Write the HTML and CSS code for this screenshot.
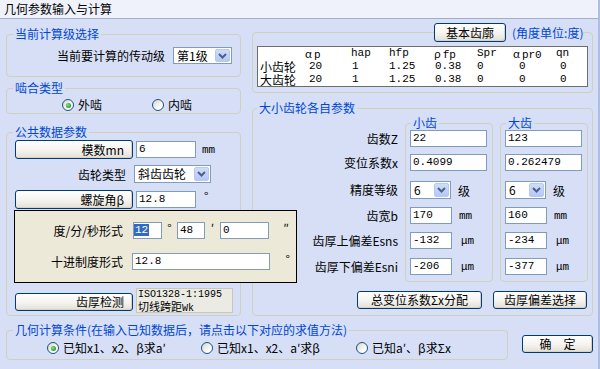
FILE: index.html
```html
<!DOCTYPE html>
<html>
<head>
  <meta charset="UTF-8">
  <link rel="stylesheet" href="styles.css">
</head>
<body>
<div class="window">
  <div class="titlebar">几何参数输入与计算</div>

  <div class="main">
    <!-- left column -->
    <div class="left-col">
      <fieldset class="group stage-group">
        <legend>当前计算级选择</legend>
        <div class="stage-row">
          <span class="stage-label">当前要计算的传动级</span>
          <div class="select stage-select">
            <span class="select-text">第1级</span>
            <span class="select-btn"><svg width="9" height="6" viewBox="0 0 9 6"><path d="M1 1 L4.5 4.5 L8 1" fill="none" stroke="#4d6185" stroke-width="2"/></svg></span>
          </div>
        </div>
      </fieldset>

      <fieldset class="group mesh-group">
        <legend>啮合类型</legend>
        <div class="mesh-row">
          <div class="radio-item"><span class="radio checked"></span>外啮</div>
          <div class="radio-item"><span class="radio"></span>内啮</div>
        </div>
      </fieldset>

      <fieldset class="group common-group">
        <legend>公共数据参数</legend>
        <div class="form-row row-module">
          <button class="btn param-btn">模数mn</button>
          <div class="field w60">6</div>
          <span class="unit unit-mm">mm</span>
        </div>
        <div class="form-row row-type">
          <span class="row-label">齿轮类型</span>
          <div class="select type-select">
            <span class="select-text">斜齿齿轮</span>
            <span class="select-btn"><svg width="9" height="6" viewBox="0 0 9 6"><path d="M1 1 L4.5 4.5 L8 1" fill="none" stroke="#4d6185" stroke-width="2"/></svg></span>
          </div>
        </div>
        <div class="form-row row-helix">
          <button class="btn param-btn">螺旋角β</button>
          <div class="field w60">12.8</div>
          <span class="unit unit-deg">°</span>
        </div>

        <div class="angle-panel">
          <div class="angle-row">
            <span class="angle-label">度/分/秒形式</span>
            <div class="field deg-field sel-field"><span class="sel-text">12</span></div>
            <span class="angle-mark">°</span>
            <div class="field min-field">48</div>
            <span class="angle-mark">′</span>
            <div class="field sec-field">0</div>
            <span class="angle-mark wide">″</span>
          </div>
          <div class="angle-row row-decimal">
            <span class="angle-label">十进制度形式</span>
            <div class="field dec-field">12.8</div>
            <span class="angle-mark wide">°</span>
          </div>
        </div>

        <div class="form-row row-check">
          <button class="btn param-btn check-btn">齿厚检测</button>
          <div class="iso-box">
            <div class="iso-line">ISO1328-1:1995</div>
            <div class="iso-line cjk">切线跨距<span class="mono">Wk</span></div>
          </div>
        </div>
      </fieldset>
    </div>

    <!-- right column -->
    <div class="right-col">
      <fieldset class="group profile-group">
        <legend class="legend-tools">
          <button class="btn profile-btn">基本齿廓</button>
          <span class="angle-unit">(角度单位:度)</span>
        </legend>
        <div class="profile-box">
          <div class="prow">
            <span class="pname"></span><span><i class="greek">α</i>p</span><span>hap</span><span>hfp</span><span><i class="greek">ρ</i>fp</span><span>Spr</span><span><i class="greek">α</i>pr0</span><span>qn</span>
          </div>
          <div class="prow pdata">
            <span class="pname">小齿轮</span><span>20</span><span>1</span><span>1.25</span><span>0.38</span><span>0</span><span>0</span><span>0</span>
          </div>
          <div class="prow pdata">
            <span class="pname">大齿轮</span><span>20</span><span>1</span><span>1.25</span><span>0.38</span><span>0</span><span>0</span><span>0</span>
          </div>
        </div>
      </fieldset>

      <fieldset class="group gear-group">
        <legend>大小齿轮各自参数</legend>
        <div class="gear-cols">
          <div class="gear-labels">
            <span class="glabel">齿数Z</span>
            <span class="glabel">变位系数x</span>
            <span class="glabel tall">精度等级</span>
            <span class="glabel">齿宽b</span>
            <span class="glabel">齿厚上偏差Esns</span>
            <span class="glabel">齿厚下偏差Esni</span>
          </div>

          <fieldset class="group sub-group">
            <legend>小齿</legend>
            <div class="sub-grid">
              <div class="sub-row"><div class="field w77">22</div></div>
              <div class="sub-row"><div class="field w77">0.4099</div></div>
              <div class="sub-row tall">
                <div class="select grade-select">
                  <span class="select-text">6</span>
                  <span class="select-btn"><svg width="9" height="6" viewBox="0 0 9 6"><path d="M1 1 L4.5 4.5 L8 1" fill="none" stroke="#4d6185" stroke-width="2"/></svg></span>
                </div>
                <span class="grade-unit">级</span>
              </div>
              <div class="sub-row"><div class="field w42">170</div><span class="unit unit-side">mm</span></div>
              <div class="sub-row"><div class="field w42">-132</div><span class="unit unit-um">μm</span></div>
              <div class="sub-row"><div class="field w42">-206</div><span class="unit unit-um">μm</span></div>
            </div>
          </fieldset>

          <fieldset class="group sub-group">
            <legend>大齿</legend>
            <div class="sub-grid">
              <div class="sub-row"><div class="field w77">123</div></div>
              <div class="sub-row"><div class="field w77">0.262479</div></div>
              <div class="sub-row tall">
                <div class="select grade-select">
                  <span class="select-text">6</span>
                  <span class="select-btn"><svg width="9" height="6" viewBox="0 0 9 6"><path d="M1 1 L4.5 4.5 L8 1" fill="none" stroke="#4d6185" stroke-width="2"/></svg></span>
                </div>
                <span class="grade-unit">级</span>
              </div>
              <div class="sub-row"><div class="field w42">160</div><span class="unit unit-side">mm</span></div>
              <div class="sub-row"><div class="field w42">-234</div><span class="unit unit-um">μm</span></div>
              <div class="sub-row"><div class="field w42">-377</div><span class="unit unit-um">μm</span></div>
            </div>
          </fieldset>
        </div>
        <div class="gear-actions">
          <button class="btn shift-btn">总变位系数Σx分配</button>
          <button class="btn dev-btn">齿厚偏差选择</button>
        </div>
      </fieldset>
    </div>
  </div>

  <!-- bottom row -->
  <div class="bottom-row">
    <fieldset class="group cond-group">
      <legend>几何计算条件(在输入已知数据后，请点击以下对应的求值方法)</legend>
      <div class="cond-row">
        <div class="radio-item"><span class="radio checked"></span>已知x1、x2、β求a′</div>
        <div class="radio-item"><span class="radio"></span>已知x1、x2、a′求β</div>
        <div class="radio-item"><span class="radio"></span>已知a′、β求Σx</div>
      </div>
    </fieldset>
    <button class="btn ok-btn">确　定</button>
  </div>
</div>
</body>
</html>
```

FILE: styles.css
```css
* {
  box-sizing: border-box;
}
body {
  margin: 0;
  background: #d6dff6;
  font-family: "Noto Sans CJK SC", sans-serif;
  font-size: 12px;
  color: #000;
}
.window {
  width: 600px;
  height: 369px;
  background: #d6dff6;
  overflow: hidden;
  border-right: 2px solid #aebde6;
}
.titlebar {
  height: 19px;
  line-height: 18px;
  padding-left: 4px;
  background: #eff2fb;
  border-bottom: 1px solid #a3aec9;
}
.main {
  display: grid;
  grid-template-columns: 235px 341px;
  column-gap: 11px;
  padding-left: 6px;
  align-items: start;
}

/* group boxes */
.group {
  margin: 0;
  padding: 0 0 0 8px;
  border: 1px solid #d0d0bf;
  border-radius: 4px;
  min-width: 0;
}
.group > legend {
  padding: 0 2px;
  margin-left: -2px;
  line-height: 14px;
  color: #0046d5;
}

/* common controls */
.btn {
  font-family: "Noto Sans CJK SC", sans-serif;
  font-size: 12px;
  line-height: 16px;
  color: #000;
  padding: 0;
  background: linear-gradient(#ffffff, #f4f3ef 55%, #e2dfd5);
  border: 1px solid #003c74;
  border-radius: 3px;
  box-shadow: inset -1px -1px 0 #d8d3c6;
}
.field {
  height: 17px;
  background: #fff;
  border: 1px solid #7f9db9;
  font-family: "Liberation Mono", monospace;
  font-size: 11px;
  line-height: 15px;
  padding-left: 2px;
  white-space: nowrap;
  overflow: hidden;
}
.sel-field {
  padding-left: 0;
}
.sel-text {
  background: #316ac5;
  color: #fff;
  padding: 0 1px;
}
.select {
  display: flex;
  height: 18px;
  background: #fff;
  border: 1px solid #7f9db9;
}
.select-text {
  flex: 1;
  padding-left: 3px;
  line-height: 16px;
  white-space: nowrap;
}
.select-btn {
  width: 15px;
  margin: 1px;
  border-radius: 2px;
  background: linear-gradient(#cfdcfd, #b4c8f6);
  border: 1px solid #b7c9f2;
  display: flex;
  align-items: center;
  justify-content: center;
}
.unit {
  font-family: "Liberation Mono", monospace;
  font-size: 11px;
  color: #000;
}
.radio-item {
  display: flex;
  align-items: center;
  gap: 4px;
  line-height: 14px;
  white-space: nowrap;
}
.radio {
  width: 12px;
  height: 12px;
  border-radius: 50%;
  border: 1px solid #1c5180;
  background: linear-gradient(135deg, #d6d6cf, #ffffff 75%);
  display: flex;
  align-items: center;
  justify-content: center;
}
.radio.checked::after {
  content: '';
  width: 5px;
  height: 5px;
  border-radius: 50%;
  background: radial-gradient(circle at 40% 40%, #8be08b, #21a121 70%);
}

/* stage group */
.stage-group {
  margin-top: 8px;
}
.stage-row {
  display: flex;
  justify-content: flex-end;
  align-items: center;
  gap: 8px;
  padding: 6px 8px 12px 0;
}
.stage-select {
  width: 59px;
  height: 17px;
}
.stage-select .select-text {
  line-height: 15px;
}

/* mesh group */
.mesh-group {
  margin-top: 4px;
}
.mesh-row {
  display: grid;
  grid-template-columns: 90px 90px;
  padding: 3px 0 1px 47px;
}

/* common data group */
.common-group {
  margin-top: 11px;
  padding-bottom: 2px;
}
.form-row {
  display: flex;
  align-items: center;
}
.row-module {
  height: 19px;
  margin-top: 1px;
}
.row-type {
  height: 18px;
  margin-top: 6px;
}
.row-helix {
  height: 19px;
  margin-top: 7px;
}
.param-btn {
  width: 118px;
  height: 19px;
  text-align: right;
  padding-right: 8px;
  margin-right: 3px;
}
.w60 {
  width: 60px;
}
.unit-mm {
  margin-left: 6px;
}
.unit-deg {
  margin-left: 8px;
  font-family: "Noto Sans CJK SC", sans-serif;
  font-size: 12px;
  align-self: flex-start;
  line-height: 12px;
}
.row-label {
  width: 111px;
  text-align: right;
  margin-right: 8px;
}
.type-select {
  width: 77px;
}

.angle-panel {
  position: relative;
  z-index: 1;
  width: 283px;
  height: 73px;
  margin: 1px 0 0 -1px;
  background: #ece9d8;
  border: 1px solid #000;
  padding-top: 11px;
}
.angle-row {
  display: flex;
  align-items: center;
  height: 17px;
}
.row-decimal {
  margin-top: 14px;
}
.angle-label {
  width: 108px;
  text-align: right;
  margin-right: 10px;
}
.row-decimal .angle-label {
  margin-right: 9px;
}
.angle-mark {
  width: 15px;
  text-align: center;
  align-self: flex-start;
  line-height: 12px;
}
.angle-mark.wide {
  width: 20px;
  text-align: right;
}
.deg-field {
  width: 29px;
}
.min-field {
  width: 28px;
}
.sec-field {
  width: 49px;
}
.dec-field {
  width: 138px;
}

.row-check {
  height: 25px;
  margin-top: 5px;
  align-items: flex-start;
}
.check-btn {
  height: 18px;
  margin-top: 5px;
}
.iso-box {
  width: 97px;
  height: 25px;
  background: #ebebe4;
  border: 1px solid #c9c7ba;
  padding-left: 1px;
}
.iso-line {
  font-family: "Liberation Mono", monospace;
  font-size: 10px;
  line-height: 11px;
  white-space: nowrap;
}
.iso-line.cjk {
  font-family: "Noto Sans CJK SC", sans-serif;
  font-size: 11px;
  line-height: 12px;
}
.mono {
  font-family: "Liberation Mono", monospace;
  font-size: 10px;
}

/* profile group */
.profile-group {
  margin-top: 4px;
  padding: 0 4px 5px 4px;
}
.profile-group > .legend-tools {
  display: flex;
  align-items: center;
  height: 19px;
  padding: 0;
  margin-left: 177px;
  line-height: 19px;
}
.profile-btn {
  width: 72px;
  height: 19px;
}
.angle-unit {
  margin-left: 6px;
  color: #0046d5;
  background: #d6dff6;
  white-space: nowrap;
}
.profile-box {
  margin-top: 4px;
  height: 41px;
  background: #fff;
  border: 1px solid #6d6d6d;
  padding: 0 0 0 2px;
  font-family: "Liberation Mono", monospace;
  font-size: 11px;
}
.prow {
  display: grid;
  grid-template-columns: 45px 46px 38px 45px 43px 36px 43px 1fr;
  height: 13px;
  line-height: 13px;
  white-space: nowrap;
}
.pname {
  font-family: "Noto Sans CJK SC", sans-serif;
  font-size: 12px;
}
.greek {
  font-style: normal;
  font-family: "Noto Sans CJK SC", sans-serif;
  font-size: 11px;
  margin-right: 2px;
}
.pdata span:nth-child(2) {
  padding-left: 4px;
}
.pdata span:nth-child(3),
.pdata span:nth-child(5) {
  padding-left: 1px;
}
.pdata span:nth-child(7) {
  padding-left: 6px;
}
.pdata span:nth-child(8) {
  padding-left: 4px;
}

/* gear group */
.gear-group {
  margin-top: 8px;
  padding: 0 4px 6px 8px;
}
.gear-group > legend {
  margin-left: -4px;
}
.gear-cols {
  display: flex;
  align-items: flex-start;
  gap: 7px;
}
.gear-labels {
  width: 137px;
  padding-top: 15px;
  display: grid;
  grid-template-rows: 24px 27px 26px 25px 26px 18px;
}
.glabel {
  text-align: right;
  line-height: 17px;
  white-space: nowrap;
}
.glabel.tall {
  line-height: 18px;
}
.sub-group {
  width: 88px;
  margin-top: 1px;
  padding: 0 0 5px 4px;
}
.sub-group > legend {
  margin-left: 1px;
}
.sub-grid {
  display: grid;
  grid-template-rows: 24px 27px 26px 25px 26px 18px;
}
.sub-row {
  display: flex;
  align-items: center;
  height: 17px;
}
.sub-row.tall {
  height: 18px;
}
.w77 {
  width: 77px;
}
.w42 {
  width: 42px;
}
.grade-select {
  width: 41px;
}
.grade-unit {
  margin-left: 7px;
}
.unit-side {
  margin-left: 7px;
}
.unit-um {
  margin-left: 9px;
}
.gear-actions {
  display: flex;
  justify-content: flex-end;
  gap: 11px;
  margin-top: 9px;
  padding-right: 1px;
}
.shift-btn {
  width: 125px;
  height: 18px;
}
.dev-btn {
  width: 94px;
  height: 18px;
}

/* bottom */
.bottom-row {
  display: flex;
  align-items: flex-start;
  margin-top: 7px;
  padding-left: 6px;
}
.cond-group {
  width: 502px;
}
.cond-row {
  display: grid;
  grid-template-columns: 154px 155px auto;
  padding: 4px 0 4px 32px;
}
.ok-btn {
  width: 71px;
  height: 18px;
  margin: 12px 0 0 14px;
}
```
